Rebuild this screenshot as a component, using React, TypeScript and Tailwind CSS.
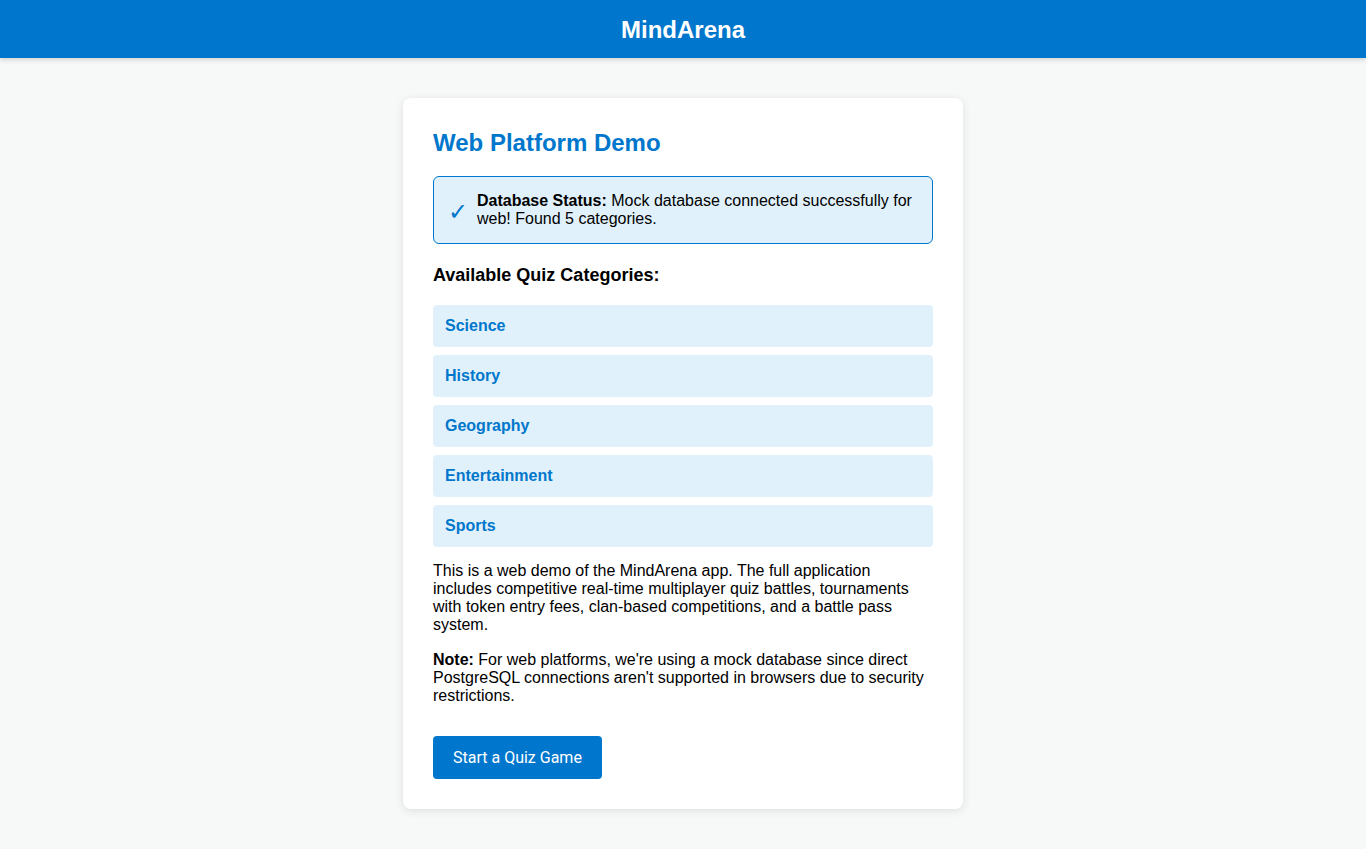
const categories = ["Science", "History", "Geography", "Entertainment", "Sports"];

export default function App() {
  return (
    <div className="min-h-screen bg-[#f7f8f8] font-['Liberation_Sans',Arial,sans-serif] text-black">
      <header className="h-[58px] bg-[#0077cc] flex items-center justify-center shadow-[0_2px_5px_rgba(0,0,0,0.15)] relative">
        <h1 className="text-2xl font-bold text-white pt-[2px]">MindArena</h1>
      </header>

      <main className="flex justify-center pt-10 pb-10">
        <div className="w-[560px] bg-white rounded-lg shadow-[0_2px_10px_rgba(0,0,0,0.1)] p-[30px]">
          <h2 className="text-2xl font-bold text-[#0077cc] leading-[30px]">Web Platform Demo</h2>

          <div className="mt-[18px] flex items-center rounded-md border border-[#0077cc] bg-[#e1f1fb] px-[14px] py-[15px]">
            <span className="text-[#0077cc] text-[24px] leading-none mr-[9px] pt-[4px] font-['DejaVu_Sans',sans-serif] font-light">✓</span>
            <p className="text-base leading-[18px]">
              <strong>Database Status:</strong> Mock database connected successfully for web! Found 5 categories.
            </p>
          </div>

          <h3 className="mt-[21px] text-lg font-bold leading-[21px]">Available Quiz Categories:</h3>

          <ul className="mt-[19px] flex flex-col gap-2">
            {categories.map((c) => (
              <li key={c} className="rounded bg-[#e1f1fb] px-3 py-3 text-base font-bold leading-[18px] text-[#0077cc]">
                {c}
              </li>
            ))}
          </ul>

          <p className="mt-[15px] text-base leading-[18px]">
            This is a web demo of the MindArena app. The full application includes competitive real-time multiplayer quiz battles, tournaments with token entry fees, clan-based competitions, and a battle pass system.
          </p>
          <p className="mt-[17px] text-base leading-[18px]">
            <strong>Note:</strong> For web platforms, we're using a mock database since direct PostgreSQL connections aren't supported in browsers due to security restrictions.
          </p>

          <button className="mt-[31px] rounded bg-[#0077cc] px-5 py-3 text-base leading-[19px] text-white font-['Roboto',sans-serif]">
            Start a Quiz Game
          </button>
        </div>
      </main>
    </div>
  );
}
